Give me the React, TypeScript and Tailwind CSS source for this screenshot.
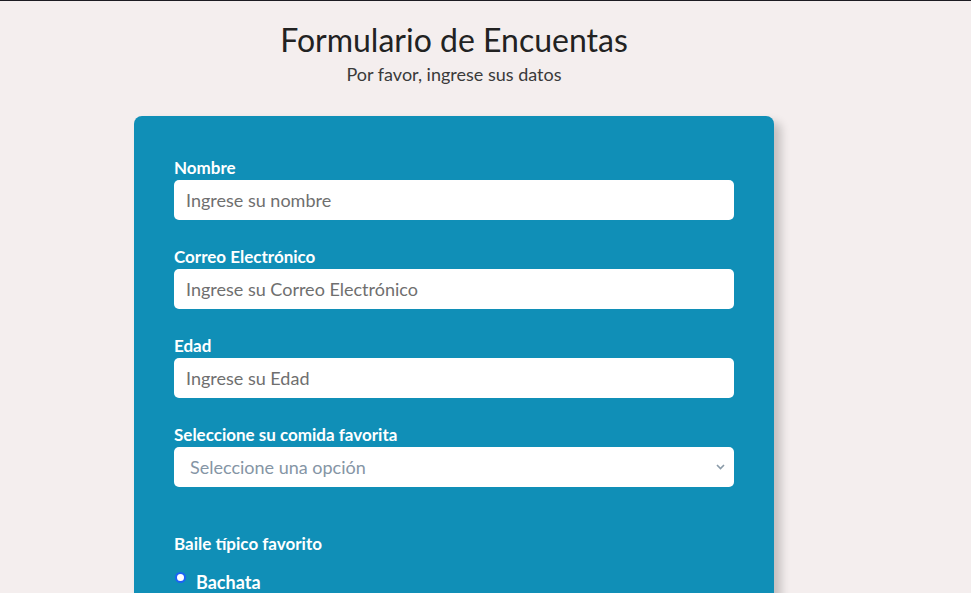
import React from "react";

const font = { fontFamily: "Lato, 'Noto Sans', sans-serif" };

function Field({ label, placeholder }: { label: string; placeholder: string }) {
  return (
    <div className="mb-[25px]">
      <label className="block h-[24px] text-[17px] leading-[24px] font-bold text-white">{label}</label>
      <input
        className="block w-full h-[40px] rounded-[5px] bg-white px-[12px] text-[18px] text-[#333] placeholder:text-[#6f6f6f] outline-none"
        placeholder={placeholder}
        style={font}
      />
    </div>
  );
}

export default function App() {
  return (
    <div className="min-h-screen bg-[#f4eeee] border-t border-[#1c1b22] overflow-hidden" style={font}>
      <div className="w-[640px] ml-[134px]">
        <header className="text-center pt-[19px]">
          <h1 className="text-[32px] leading-[40px] text-[#222]">Formulario de Encuentas</h1>
          <p className="mt-[2px] text-[18px] leading-[24px] text-[#3a3a3a]">Por favor, ingrese sus datos</p>
        </header>
        <form className="mt-[30px] rounded-[8px] bg-[#108fb7] px-[40px] pt-[40px] pb-[40px] shadow-[7px_6px_10px_rgba(0,0,0,0.2)]">
          <Field label="Nombre" placeholder="Ingrese su nombre" />
          <Field label="Correo Electrónico" placeholder="Ingrese su Correo Electrónico" />
          <Field label="Edad" placeholder="Ingrese su Edad" />
          <div>
            <label className="block h-[24px] text-[17px] leading-[24px] font-bold text-white">Seleccione su comida favorita</label>
            <div className="relative h-[40px] rounded-[5px] bg-white flex items-center px-[16px]">
              <span className="text-[18px] text-[#8595a5]">Seleccione una opción</span>
              <svg className="absolute right-[9px] top-[17px]" width="9" height="6" viewBox="0 0 9 6" fill="none">
                <path d="M1 1l3.5 3.5L8 1" stroke="#8a9aa8" strokeWidth="1.6" />
              </svg>
            </div>
          </div>
          <div className="mt-[45px]">
            <p className="h-[24px] text-[17px] leading-[24px] font-bold text-white">Baile típico favorito</p>
            <div className="mt-[8px] flex flex-col gap-[8px]">
              {["Bachata", "Merengue", "Salsa", "Cumbia"].map((d) => (
                <div key={d} className="flex items-start gap-[10px]">
                  <span className="mt-[8px] ml-[1px] w-[11px] h-[11px] rounded-full border-2 border-[#1b62f5] bg-white" />
                  <span className="text-[18px] leading-[24px] font-bold text-white pt-[6px]">{d}</span>
                </div>
              ))}
            </div>
          </div>
        </form>
      </div>
    </div>
  );
}
